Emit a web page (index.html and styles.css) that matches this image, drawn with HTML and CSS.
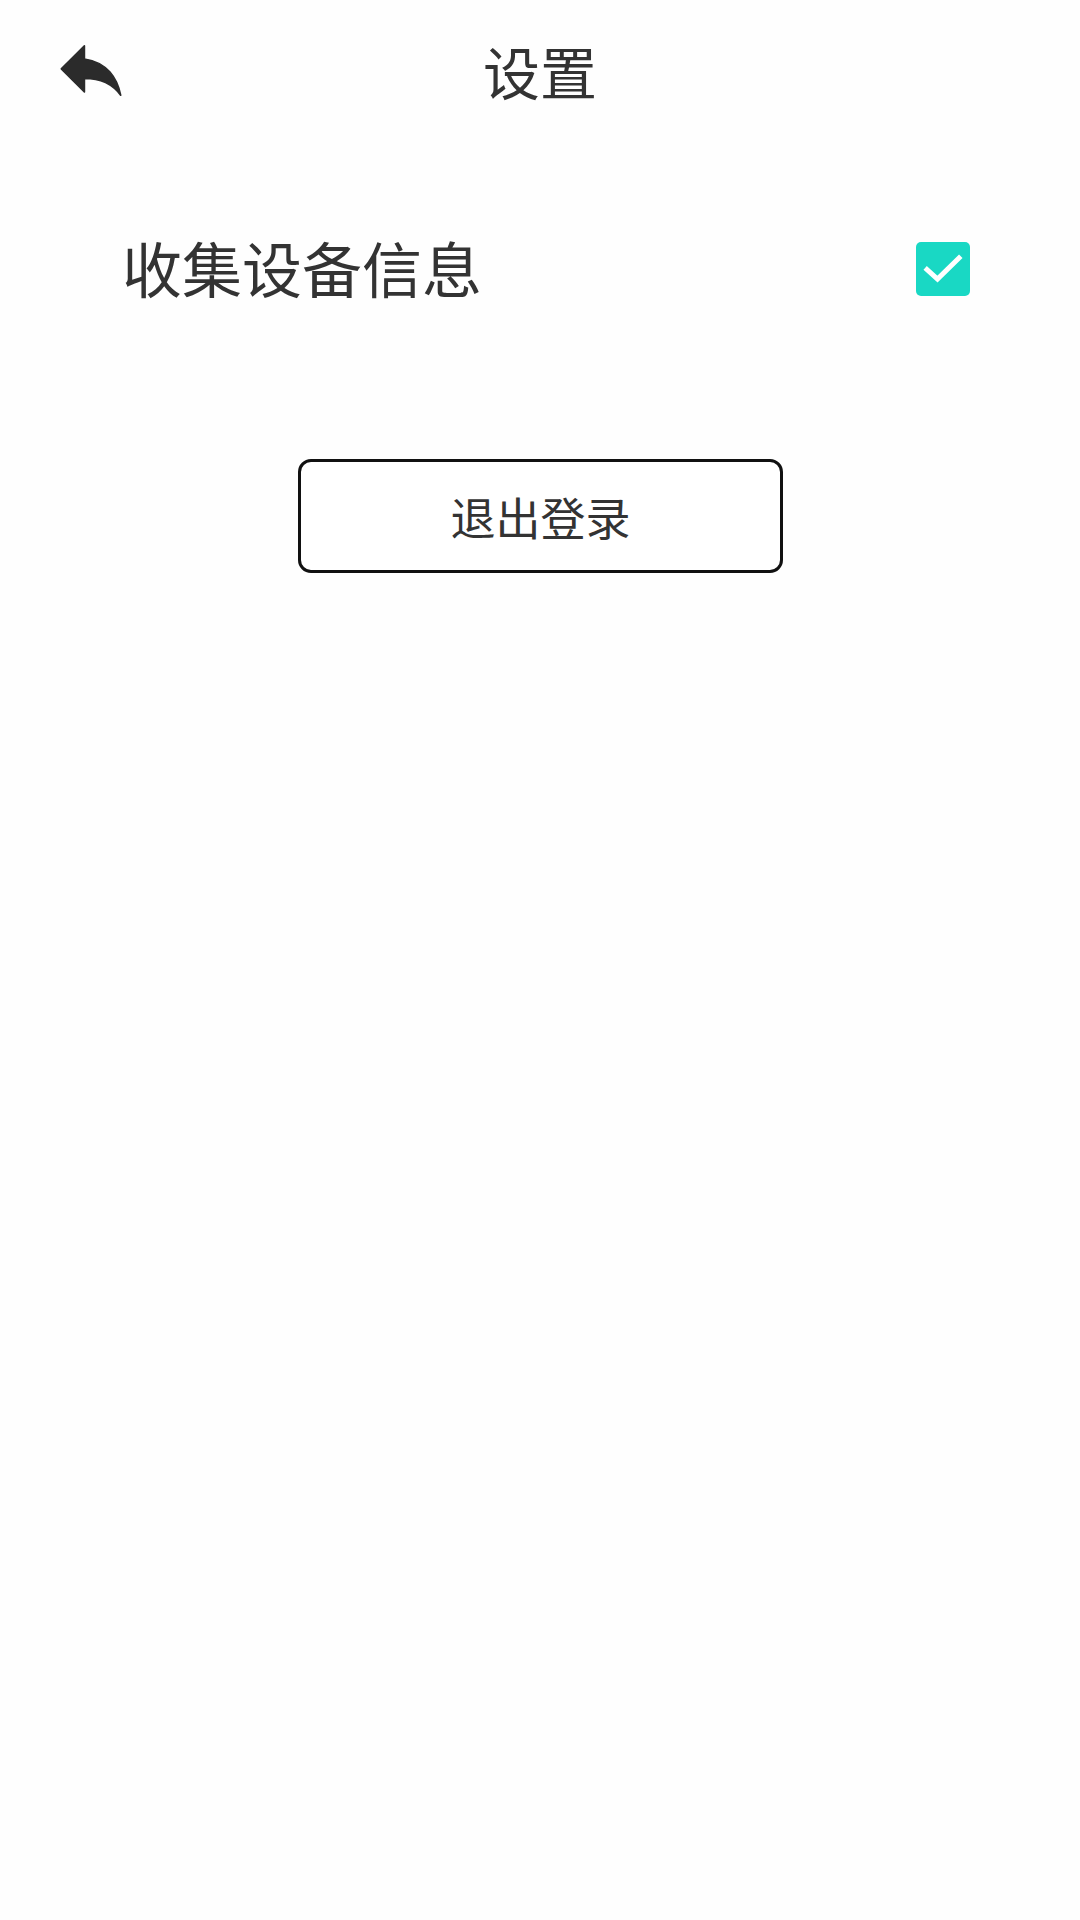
FILE: index.html
```html
<!DOCTYPE html>
<html lang="zh-CN">
<head>
<meta charset="utf-8">
<title>设置</title>
<link rel="stylesheet" href="styles.css">
</head>
<body>
<div class="page">
  <header class="header">
    <button class="back" aria-label="返回">
      <svg viewBox="2.6 4.6 18.8 15.8" width="62" height="55">
        <path d="M10 9V5l-7 7 7 7v-4.1c5 0 8.5 1.6 11 5.1-1-5-4-10-11-11z" fill="#2b2b2b" stroke="#2b2b2b" stroke-width="0.5" stroke-linejoin="round"/>
      </svg>
    </button>
    <h1 class="title">设置</h1>
  </header>
  <div class="row">
    <span class="label">收集设备信息</span>
    <span class="checkbox">
      <svg viewBox="0 0 54 54" width="54" height="54">
        <path d="M11 27.5 L21.5 37 L43 16" fill="none" stroke="#fff" stroke-width="5" stroke-linecap="square"/>
      </svg>
    </span>
  </div>
  <div class="actions">
    <button class="logout">退出登录</button>
  </div>
</div>
</body>
</html>
```
FILE: styles.css
```css
html, body {
  margin: 0;
  padding: 0;
  background: #fefefe;
}
body {
  width: 1080px;
  height: 1920px;
  font-family: "Noto Sans CJK SC", "Noto Sans", sans-serif;
  color: #333;
}
.page {
  display: flex;
  flex-direction: column;
}
.header {
  position: relative;
  height: 146px;
  display: flex;
  align-items: center;
  justify-content: center;
}
.back {
  position: absolute;
  left: 60px;
  top: 43px;
  padding: 0;
  margin: 0;
  border: 0;
  background: none;
  line-height: 0;
}
.title {
  margin: 0 0 6px 0;
  font-size: 57px;
  font-weight: 400;
  line-height: 1;
  color: #333;
}
.row {
  margin-top: 93px;
  height: 60px;
  display: flex;
  align-items: center;
  justify-content: space-between;
  padding: 0 110px 0 122px;
}
.label {
  font-size: 60px;
  line-height: 1;
  color: #333;
  margin-bottom: 4px;
}
.checkbox {
  width: 54px;
  height: 54px;
  border-radius: 5px;
  background: #19d8c4;
  line-height: 0;
}
.actions {
  margin-top: 160px;
  display: flex;
  justify-content: center;
}
.logout {
  box-sizing: border-box;
  width: 485px;
  height: 114px;
  margin-left: 1px;
  border: 3px solid #111;
  border-radius: 13px;
  background: #fff;
  font-family: "Noto Sans CJK SC", "Noto Sans", sans-serif;
  font-size: 45px;
  color: #333;
  padding: 0;
}
```
